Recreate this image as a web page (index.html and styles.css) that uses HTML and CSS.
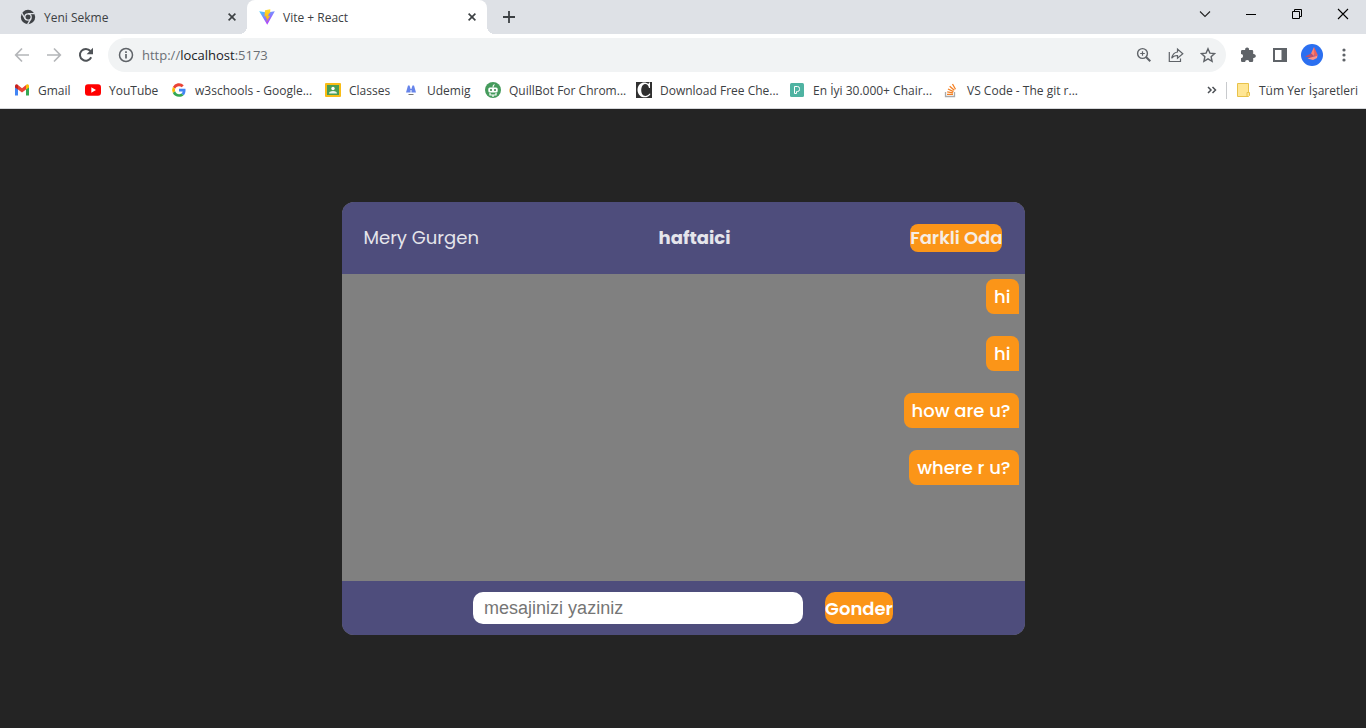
FILE: index.html
```html
<!DOCTYPE html>
<html lang="tr">
<head>
<meta charset="utf-8">
<meta name="viewport" content="width=device-width, initial-scale=1">
<title>Vite + React</title>
<link rel="stylesheet" href="styles.css">
</head>
<body>
<header class="browser">
  <div class="tabstrip">
    <div class="tab tab-idle">
      <svg class="icon" viewBox="0 0 16 16"><circle cx="8" cy="8" r="7.2" fill="#3f4246"/><circle cx="8" cy="8" r="3.2" fill="#3f4246" stroke="#dee1e6" stroke-width="1.3"/><path d="M8 4.6h6.6M5.1 9.7 1.8 4M10.9 9.7 7.6 15.3" stroke="#dee1e6" stroke-width="1.3"/></svg>
      <span class="tab-title">Yeni Sekme</span>
      <button class="icon-btn" aria-label="Sekmeyi kapat"><svg class="tiny" viewBox="0 0 10 10"><path d="M1.600 1.600l6.800 6.800M8.400 1.600L1.600 8.400" stroke="#3c4043" stroke-width="1.6"/></svg></button>
    </div>
    <div class="tab tab-active">
      <svg class="icon" viewBox="0 0 16 16"><defs><linearGradient id="v" x1="0" y1="0" x2=".6" y2="1"><stop offset="0" stop-color="#41d1ff"/><stop offset="1" stop-color="#bd34fe"/></linearGradient><linearGradient id="b" x1="0" y1="0" x2="0" y2="1"><stop offset="0" stop-color="#ffdd35"/><stop offset="1" stop-color="#ffa800"/></linearGradient></defs><path d="M.2 2.2 8 3.4l7.8-1.2L8.2 15.8z" fill="url(#v)"/><path d="M11.3.2 6 1.3 5.5 7.6l1.8-.4-.5 2.4 1.5-.4-.7 3.9 3.4-6.300-1.900.4.8-2.800 1.300-.3z" fill="url(#b)"/></svg>
      <span class="tab-title">Vite + React</span>
      <button class="icon-btn" aria-label="Sekmeyi kapat"><svg class="tiny" viewBox="0 0 10 10"><path d="M1.600 1.600l6.800 6.800M8.400 1.600L1.600 8.400" stroke="#3c4043" stroke-width="1.6"/></svg></button>
    </div>
    <button class="icon-btn new-tab" aria-label="Yeni sekme"><svg class="small" viewBox="0 0 12 12"><path d="M6 0v12M0 6h12" stroke="#3c4043" stroke-width="1.8"/></svg></button>
    <div class="window-controls">
      <button class="icon-btn" aria-label="Sekme ara"><svg class="small" viewBox="0 0 12 12"><path d="M1 3.5l5 5 5-5" fill="none" stroke="#222" stroke-width="1.1"/></svg></button>
      <button class="icon-btn" aria-label="Simge durumuna küçült"><svg class="small" viewBox="0 0 12 12"><path d="M1 6.5h10" stroke="#000"/></svg></button>
      <button class="icon-btn" aria-label="Önceki boyut"><svg class="small" viewBox="0 0 12 12"><path d="M1.5 3.5h7v7h-7zM3.5 3V1.500h7v7H9" fill="none" stroke="#000"/></svg></button>
      <button class="icon-btn" aria-label="Kapat"><svg class="small" viewBox="0 0 12 12"><path d="M1 1l10 10M11 1L1 11" stroke="#000" stroke-width="1.1"/></svg></button>
    </div>
  </div>
  <div class="toolbar">
    <div class="nav">
      <button class="icon-btn" aria-label="Geri"><svg class="icon" viewBox="0 0 16 16"><path d="M15 8H2M8 1.500 1.700 8 8 14.500" fill="none" stroke="#b4b6b9" stroke-width="1.700"/></svg></button>
      <button class="icon-btn" aria-label="İleri"><svg class="icon" viewBox="0 0 16 16"><path d="M1 8h13M8 1.500 14.300 8 8 14.500" fill="none" stroke="#b4b6b9" stroke-width="1.700"/></svg></button>
      <button class="icon-btn" aria-label="Yenile"><svg class="icon" viewBox="0 0 16 16"><path d="M13.200 10.300A5.900 5.900 0 1 1 12.400 4" fill="none" stroke="#4f5357" stroke-width="2"/><path d="M15 .800v6.400H8.600z" fill="#4f5357"/></svg></button>
    </div>
    <div class="omnibox">
      <svg class="icon" viewBox="0 0 16 16"><circle cx="8" cy="8" r="6.500" fill="none" stroke="#5f6368" stroke-width="1.500"/><path d="M8 7v4.500M8 4.300v1.700" stroke="#5f6368" stroke-width="1.700"/></svg>
      <span class="url">http://<span class="host">localhost</span>:5173</span>
      <div class="omni-actions">
        <button class="icon-btn" aria-label="Yakınlaştır"><svg class="icon" viewBox="0 0 16 16"><circle cx="6.500" cy="6.500" r="4.900" fill="none" stroke="#5f6368" stroke-width="1.400"/><path d="M10 10l4.300 4.300" stroke="#5f6368" stroke-width="2"/><path d="M6.500 4.200v4.600M4.200 6.500h4.600" stroke="#5f6368" stroke-width="1.200"/></svg></button>
        <button class="icon-btn" aria-label="Paylaş"><svg class="icon" viewBox="0 0 16 16"><path d="M1.300 5v9.500h11.200V11.500M9.500 5V2l5.300 4.700-5.300 4.500V8.500C6.800 8.400 5 9.200 3.700 11.300 4.300 8 6 5.500 9.500 5z" fill="none" stroke="#5f6368" stroke-width="1.200"/></svg></button>
        <button class="icon-btn" aria-label="Yer işareti ekle"><svg class="icon" viewBox="0 0 16 16"><path d="M8 1.800l1.900 4.300 4.700.5-3.500 3.100 1 4.600L8 11.900l-4.100 2.400 1-4.600L1.400 6.600l4.700-.5z" fill="none" stroke="#5f6368" stroke-width="1.400"/></svg></button>
      </div>
    </div>
    <div class="extensions">
      <button class="icon-btn" aria-label="Uzantılar"><svg class="icon" viewBox="0 0 16 16"><path d="M1 4.200Q1 3 2.200 3h3a2 2 0 1 1 3.800 0h3q1.200 0 1.200 1.200v2.900a2 2 0 1 1 0 3.800v2.900q0 1.200-1.200 1.200H9.300a2.100 2.100 0 0 0-4.200 0H2.200Q1 15 1 13.800v-2.600a2.100 2.100 0 0 0 0-4.200z" fill="#5f6368"/></svg></button>
      <button class="icon-btn" aria-label="Yan panel"><svg class="icon" viewBox="0 0 16 16"><path d="M1 1h14v14H1zM3 3v10h6.500V3z" fill="#5f6368" fill-rule="evenodd"/></svg></button>
      <button class="icon-btn profile" aria-label="Profil"><svg class="avatar" viewBox="0 0 22 22"><circle cx="11" cy="11" r="11" fill="#2b6ff0"/><path d="M13 3 10 9.500l3 3 1-4z" fill="#ff8070"/><path d="M4 12.500l6-3 3.500 3-3 1.500z" fill="#b8506e"/><path d="M6.500 14.500l10-3-.5 2.500-4 2z" fill="#ff9384"/><path d="M13 3l4 8.500-3.500 1z" fill="#ee5f5c"/></svg></button>
      <button class="icon-btn" aria-label="Menü"><svg class="icon" viewBox="0 0 16 16"><g fill="#5f6368"><circle cx="8" cy="3" r="1.600"/><circle cx="8" cy="8" r="1.600"/><circle cx="8" cy="13" r="1.600"/></g></svg></button>
    </div>
  </div>
  <nav class="bookmarks" aria-label="Yer işaretleri">
    <div class="bookmark-list">
      <a href="#"><svg class="icon" viewBox="0 0 16 16"><path d="M1 3.500v10h3V7z" fill="#4285f4"/><path d="M15 3.500v10h-3V7z" fill="#34a853"/><path d="M1 3.800Q1 2 3 2.300L4 3v4.500L1 5.500z" fill="#c5221f"/><path d="M15 3.800Q15 2 13 2.300L12 3v4.500l3-2z" fill="#fbbc04"/><path d="M4 3l4 3.200L12 3v4.500L8 10.500 4 7.500z" fill="#ea4335"/></svg>Gmail</a>
      <a href="#"><svg class="icon" viewBox="0 0 16 16"><rect y="2.300" width="16" height="11.500" rx="3" fill="#f00"/><path d="M6.300 5.300v5.400L11 8z" fill="#fff"/></svg>YouTube</a>
      <a href="#"><svg class="icon" viewBox="0 0 48 48"><path fill="#ea4335" d="M24 12.500c3.200 0 6 1.100 8.300 3.200l6-6A20.500 20.500 0 0 0 5.500 15l7 5.400C14.300 15.500 18.700 12.500 24 12.500z"/><path fill="#4285f4" d="M43.600 24.500c0-1.500-.1-2.800-.4-4H24v8h11a9.500 9.500 0 0 1-4 6.200l6.700 5.200c3.900-3.600 5.900-8.900 5.900-15.400z"/><path fill="#fbbc05" d="M12.500 27.600a12 12 0 0 1 0-7.200l-7-5.400a20.500 20.500 0 0 0 0 18z"/><path fill="#34a853" d="M24 44.500c5.500 0 10.200-1.800 13.700-4.900L31 34.500c-6.500 4.200-15.600 1.800-18.500-6.900l-7 5.400A20.500 20.500 0 0 0 24 44.500z"/></svg>w3schools - Google...</a>
      <a href="#"><svg class="icon" viewBox="0 0 16 16"><rect y="1" width="16" height="14" rx="1" fill="#f9bc15"/><rect x="2" y="3" width="12" height="10" fill="#4a9c55"/><circle cx="8" cy="6.500" r="1.700" fill="#fff"/><path d="M4 11.500q0-2.500 4-2.500t4 2.500z" fill="#e8f5e9"/></svg>Classes</a>
      <a href="#"><svg class="icon" viewBox="0 0 16 16"><path d="M3 10.500 5 3.500h1.500l1 3V10.500zM13 10.500l-2-7H9.500l-1 3V10.500z" fill="#6684ea"/><path d="M6.500 7.500h3" stroke="#6684ea"/><path d="M5.500 12.500h5" stroke="#777"/></svg>Udemig</a>
      <a href="#"><svg class="icon" viewBox="0 0 16 16"><circle cx="8" cy="8" r="8" fill="#459b5c"/><rect x="3.300" y="5.500" width="9.400" height="5" rx="1.500" fill="#fff"/><circle cx="6" cy="8" r="1" fill="#357e48"/><circle cx="10" cy="8" r="1" fill="#357e48"/><path d="M8 5.500q0-2.500 1.500-3M5 11v2h6v-2M8 13v2" fill="none" stroke="#fff" stroke-width="1.200"/></svg>QuillBot For Chrom...</a>
      <a href="#"><svg class="icon" viewBox="0 0 16 16"><path d="M0 0h16v16H0z" fill="#303030"/><path d="M14 6V.500h-1l-.5 1.500C10 -.5 2 -1 1.500 8 2 17 12 17 14.500 12l-.8-.6C11 15 5.500 15.500 5.200 8 5.500 .5 12 0 13 6z" fill="#fff"/></svg>Download Free Che...</a>
      <a href="#"><svg class="icon" viewBox="0 0 16 16"><rect x="1" y="1" width="14" height="14" rx="1.500" fill="#4fb3a2"/><path d="M5.500 4.500h3q2 0 2 2v1q0 2-2 2h-1v2h-2z" fill="none" stroke="#fff"/></svg>En İyi 30.000+ Chair...</a>
      <a href="#"><svg class="icon" viewBox="0 0 16 16"><path d="M2.500 10v4.500h9V10" fill="none" stroke="#aaa" stroke-width="1.300"/><path d="M4 12.300h6M4.200 9.800l5.800 1M5 7l5.500 2.700M6.700 4.200l4.600 4M9.500 2l3 5.200" stroke="#f48024" stroke-width="1.300"/></svg>VS Code - The git r...</a>
    </div>
    <div class="bookmark-end">
      <button class="icon-btn" aria-label="Diğer yer işaretleri"><svg class="small" viewBox="0 0 12 12"><path d="M2 3 5 6 2 9M6.500 3l3 3-3 3" fill="none" stroke="#4d5156" stroke-width="1.500"/></svg></button>
      <a href="#" class="all"><svg class="icon" viewBox="0 0 16 16"><path d="M2.500 1.500h11v9h1v3l-1 1h-11z" fill="#ffe694" stroke="#e8c24a"/><path d="M12 14v-3.500h2" fill="none" stroke="#e8c24a"/></svg>Tüm Yer İşaretleri</a>
    </div>
  </nav>
</header>
<main class="page">
  <section class="chat">
    <header class="chat-head">
      <span>Mery Gurgen</span>
      <strong class="room">haftaici</strong>
      <button class="btn">Farkli Oda</button>
    </header>
    <div class="messages">
      <p class="message">hi</p>
      <p class="message">hi</p>
      <p class="message">how are u?</p>
      <p class="message">where r u?</p>
    </div>
    <form class="composer">
      <input class="field" type="text" placeholder="mesajinizi yaziniz" aria-label="mesajinizi yaziniz">
      <button class="btn send" type="button">Gonder</button>
    </form>
  </section>
</main>
</body>
</html>
```

FILE: styles.css
```css
* { box-sizing: border-box; }
body {
  margin: 0;
  min-height: 100vh;
  display: flex;
  flex-direction: column;
  background: #242424;
  font-family: "Segoe UI", "Open Sans", sans-serif;
  font-size: 12px;
  color: #3c4043;
}
button { font: inherit; color: inherit; border: 0; padding: 0; background: none; cursor: pointer; }
a { color: inherit; text-decoration: none; }
svg { display: block; flex: none; }
.icon { width: 16px; height: 16px; }
.small { width: 12px; height: 12px; }
.tiny { width: 10px; height: 10px; }
.avatar { width: 22px; height: 22px; }
.icon-btn { display: flex; align-items: center; justify-content: center; flex: none; }

.browser { background: #fff; border-bottom: 1px solid #d5d7da; }
.tabstrip { display: flex; height: 34px; background: #dee1e6; }
.tab { display: flex; align-items: center; gap: 8px; width: 240px; padding: 0 10px 0 12px; }
.tab-idle { width: 247px; padding-left: 20px; }
.tab-active { position: relative; background: #fff; border-radius: 8px 8px 0 0; }
.tab-active::before,
.tab-active::after { content: ""; position: absolute; bottom: 0; width: 8px; height: 8px; }
.tab-active::before { right: 100%; background: radial-gradient(circle at 0 0, transparent 8px, #fff 8px); }
.tab-active::after { left: 100%; background: radial-gradient(circle at 100% 0, transparent 8px, #fff 8px); }
.tab-title { flex: 1; }
.new-tab { margin-left: 16px; }
.window-controls { display: flex; gap: 34px; margin-left: auto; padding: 0 17px 6px 0; }

.toolbar { display: flex; align-items: center; padding: 4px 14px 0; }
.nav { display: flex; gap: 16px; }
.omnibox {
  display: flex;
  flex: 1;
  align-items: center;
  gap: 8px;
  height: 34px;
  margin: 0 14px;
  padding: 0 10px;
  border-radius: 17px;
  background: #f1f3f4;
}
.url { flex: 1; font-size: 13px; color: #6b6f74; }
.host { color: #202124; }
.omni-actions { display: flex; gap: 16px; }
.extensions { display: flex; align-items: center; gap: 16px; }
.profile { margin: 0 -3px; }

.bookmarks { display: flex; align-items: center; justify-content: space-between; height: 36px; padding: 0 8px 0 14px; }
.bookmark-list { display: grid; grid-template-columns: 71px 86px 154px 78px 82px 151px 153px 154px 140px; }
.bookmark-list a, .all { display: flex; align-items: center; gap: 8px; white-space: nowrap; }
.bookmark-end { display: flex; align-items: center; gap: 8px; }
.all { padding-left: 8px; border-left: 1px solid #c8cacd; }

.page {
  flex: 1;
  display: grid;
  place-items: center;
  font-family: Poppins, Inter, sans-serif;
  font-size: 18px;
  line-height: 27px;
}
.chat {
  display: flex;
  flex-direction: column;
  width: 50%;
  min-height: 70%;
  border-radius: 12px;
  overflow: hidden;
  background: #808080;
}
.chat-head {
  display: flex;
  align-items: center;
  justify-content: space-between;
  padding: 22px;
  background: #4e4d7c;
  color: #e5e5eb;
}
.room { font-weight: 700; }
.btn { min-height: 28px; border-radius: 8px; background: #fb9518; color: #fff; font-weight: 600; }
.chat-head .btn { color: #f6ede5; }
.messages { flex: 1; display: flex; flex-direction: column; align-items: flex-end; gap: 22px; padding: 5px 6px; }
.message { margin: 0; padding: 4px 8px; border-radius: 8px 8px 0 8px; background: #fb9518; color: #fff; font-weight: 500; }
.composer { display: flex; justify-content: center; gap: 22px; padding: 11px; background: #4e4d7c; }
.field {
  width: 330px;
  height: 32px;
  border: 0;
  border-radius: 10px;
  padding: 0 11px;
  background: #fff;
  font-family: Arial, "Liberation Sans", sans-serif;
  font-size: 18px;
}
.field::placeholder { color: #757575; }
.send { border-radius: 10px; }
```
